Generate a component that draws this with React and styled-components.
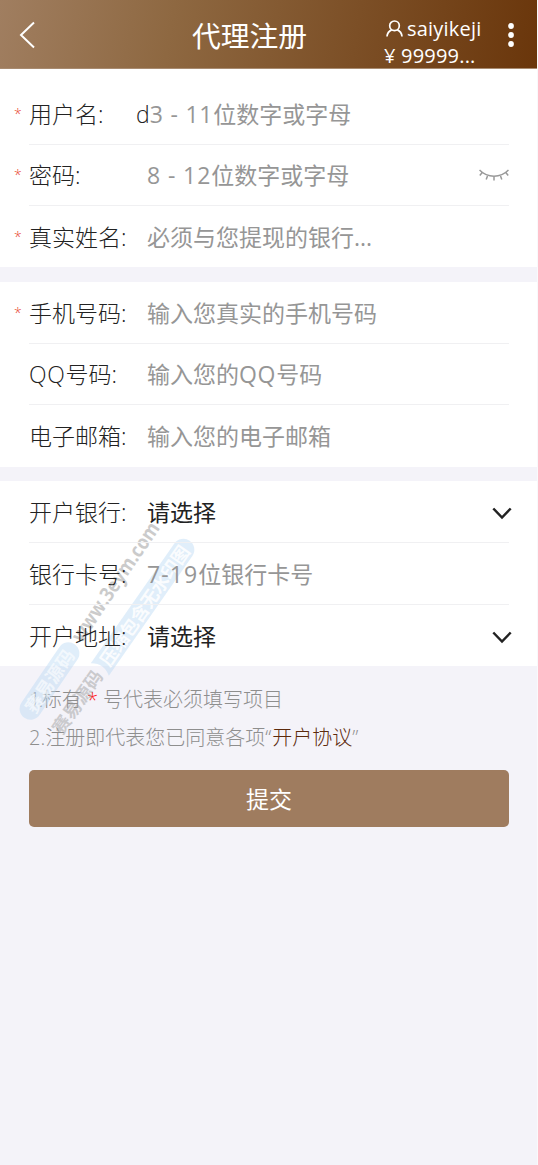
import React from "react";
import styled, { createGlobalStyle } from "styled-components";

const Global = createGlobalStyle`
  * { box-sizing: border-box; }
  body {
    margin: 0;
    background: #f4f3f9;
    font-family: "Open Sans", "Noto Sans CJK SC", sans-serif;
    color: #222;
  }
`;

const Page = styled.div`
  position: relative;
  min-height: 1165px;
  overflow: hidden;
  border-right: 1px solid #f9f9fb;
`;

const Header = styled.header`
  display: grid;
  grid-template-columns: 152px 195px 1fr 53px;
  align-items: center;
  height: 69px;
  padding-top: 1px;
  color: #fff;
  background: linear-gradient(100deg, #a07e60 0%, #8e6841 32%, #6a360b 100%);
  border-bottom: 1px solid #a88b70;
`;

const Back = styled.button`
  display: flex;
  padding: 0 0 0 18px;
  border: 0;
  background: none;
  color: inherit;
`;

const Title = styled.h1`
  margin: 0;
  padding-top: 1px;
  text-align: center;
  font-size: 28.8px;
  line-height: 40px;
  font-weight: 400;
`;

const Account = styled.div`
  padding: 14px 0 0 37px;
  font-size: 20px;
  line-height: 27px;
  letter-spacing: 0.2px;
  white-space: nowrap;
`;

const AccountName = styled.div`
  display: flex;
  align-items: center;
  gap: 4px;
  padding-left: 2px;
`;

const More = styled.button`
  display: flex;
  justify-content: center;
  padding: 0;
  border: 0;
  background: none;
`;

const Card = styled.section`
  padding-top: ${(p) => p.$top || 0}px;
  margin-bottom: ${(p) => p.$gap || 0}px;
  background: #fff;
`;

const Row = styled.div`
  position: relative;
  z-index: 1;
  display: flex;
  align-items: center;
  height: ${(p) => p.$h || 61}px;
  margin: 0 28px 0 29px;
  border-bottom: ${(p) => (p.$last ? "0" : "1px solid #f0f0f2")};
  font-size: 23px;
  line-height: 34px;
  white-space: nowrap;
`;

const Star = styled.span`
  width: 15px;
  margin-left: -15px;
  font-size: 14px;
  font-weight: 300;
  color: #e8452c;
`;

const Label = styled.label`
  width: ${(p) => p.$w || 118}px;
  font-weight: 300;
`;

const Value = styled.span`
  flex: 1;
  color: ${(p) => (p.$picked ? "#222" : "#969696")};
`;

const Typed = styled.span`
  font-weight: 300;
  color: #222;
`;

const Spaced = styled.span`
  letter-spacing: ${(p) => p.$by}px;
`;

const Notes = styled.div`
  padding: 15px 29px 13px;
  font-size: 20px;
  line-height: 38px;
  font-weight: 300;
  color: #8e8e8e;
`;

const Note = styled.p`
  margin: 0;
  white-space: pre;
`;

const Red = styled.span`
  color: #f22;
`;

const Agreement = styled.a`
  margin-left: 1px;
  color: #5c2a0c;
`;

const Submit = styled.button`
  display: block;
  width: 480px;
  height: 57px;
  margin-left: 29px;
  border: 0;
  border-radius: 5px;
  background: #9f7c5f;
  color: #fff;
  font: 400 23px/34px "Open Sans", "Noto Sans CJK SC", sans-serif;
`;

const Stamp = styled.svg`
  position: absolute;
  left: 0;
  top: 510px;
  pointer-events: none;
`;

const ChevronBox = styled.span`
  display: flex;
  margin: 3px -4px 0 0;
`;

const Chevron = () => (
  <ChevronBox>
    <svg width="21" height="13" viewBox="0 0 21 13">
      <path d="M1.300 1.500 10 10.500 18.700 1.500" fill="none" stroke="#222" strokeWidth="2.500" />
    </svg>
  </ChevronBox>
);

const ClosedEye = () => (
  <svg width="30" height="14" viewBox="0 0 30 14" fill="none" stroke="#999" strokeWidth="1.5">
    <path d="M.5 2C8.500 10.300 21.500 10.300 29.500 2M3.200 4.500.8 7.500M8.500 8 7.200 11.500M15 8.500v4M21.500 8l1.300 3.500M26.800 4.500l2.400 3" />
  </svg>
);

function Field({ label, required, value, typed, picked, labelWidth, children, ...row }) {
  return (
    <Row {...row}>
      {required && <Star>*</Star>}
      <Label $w={labelWidth}>{label}</Label>
      <Value $picked={picked}>
        {typed && <Typed>{typed}</Typed>}
        {value}
      </Value>
      {children}
    </Row>
  );
}

function Watermark() {
  return (
    <Stamp width="210" height="240" viewBox="0 510 210 240" fontFamily='"Noto Sans CJK SC", sans-serif' fontWeight="700">
      <g transform="translate(49.5 681) rotate(-55.7)">
        <rect x="-44.500" y="-11" width="89" height="22" rx="11" fill="#b4d7f2" opacity=".42" />
        <text x="-36" y="7" fontSize="18" textLength="72" fill="#fff" opacity=".6">赛易源码</text>
        <text x="49" y="5.500" fontSize="20" textLength="140" lengthAdjust="spacingAndGlyphs" fill="#999" opacity=".5" fontFamily='"Open Sans"'>www.3eym.com</text>
      </g>
      <g transform="translate(77.5 701.5) rotate(-55.1)">
        <text x="-37" y="7" fontSize="18" textLength="73" fill="#999" opacity=".45">赛易源码</text>
        <path d="M39-11H185a11 11 0 0 1 0 22H39Q47 0 39-11Z" fill="#b4d7f2" opacity=".42" />
        <text x="46" y="7" fontSize="18" textLength="142" fill="#fff" opacity=".85">压缩包含无水印图</text>
      </g>
    </Stamp>
  );
}

export default function App() {
  return (
    <Page>
      <Global />
      <Header>
        <Back aria-label="返回">
          <svg width="18" height="28" viewBox="0 0 18 28">
            <path d="M16 1.500 3 14 16 26.500" fill="none" stroke="#fff" strokeWidth="2" />
          </svg>
        </Back>
        <Title>代理注册</Title>
        <Account>
          <AccountName>
            <svg width="17" height="17" viewBox="0 0 17 17" fill="none" stroke="#fff" strokeWidth="1.7">
              <circle cx="8.500" cy="5.800" r="4.800" />
              <path d="M1 16.500c.3-3.600 2-5.500 4.700-6.600M16 16.500c-.3-3.600-2-5.500-4.700-6.600" />
            </svg>
            saiyikeji
          </AccountName>
          <div>¥ 99999...</div>
        </Account>
        <More aria-label="菜单">
          <svg width="8" height="26" viewBox="0 0 8 26" fill="#fff">
            <circle cx="4" cy="4" r="2.900" />
            <circle cx="4" cy="13" r="2.900" />
            <circle cx="4" cy="22" r="2.900" />
          </svg>
        </More>
      </Header>

      <Card $top={14} $gap={15}>
        <Field required label="用户名:" labelWidth={107} typed="d" value={<><Spaced $by={0.8}>3 - 11</Spaced>位数字或字母</>} $h={62} />
        <Field required label="密码:" value={<><Spaced $by={0.9}>8 - 12</Spaced>位数字或字母</>}>
          <ClosedEye />
        </Field>
        <Field required label="真实姓名:" value="必须与您提现的银行..." $last />
      </Card>

      <Card $gap={14}>
        <Field required label="手机号码:" value="输入您真实的手机号码" $h={62} />
        <Field label={<><Spaced $by={0.7}>QQ</Spaced>号码:</>} value={<>输入您的<Spaced $by={0.7}>QQ</Spaced>号码</>} />
        <Field label="电子邮箱:" value="输入您的电子邮箱" $last $h={62} />
      </Card>

      <Card>
        <Field label="开户银行:" value="请选择" picked $h={62}>
          <Chevron />
        </Field>
        <Field label="银行卡号:" value={<><Spaced $by={1.1}>7-19</Spaced>位银行卡号</>} $h={62} />
        <Field label="开户地址:" value="请选择" picked $last>
          <Chevron />
        </Field>
      </Card>

      <Notes>
        <Note><Spaced $by={-2}>1</Spaced><Spaced $by={-1.5}>.</Spaced>标有<Red> * </Red>号代表必须填写项目</Note>
        <Note>2.注册即代表您已同意各项“<Agreement>开户协议</Agreement>”</Note>
      </Notes>
      <Submit>提交</Submit>
      <Watermark />
    </Page>
  );
}
